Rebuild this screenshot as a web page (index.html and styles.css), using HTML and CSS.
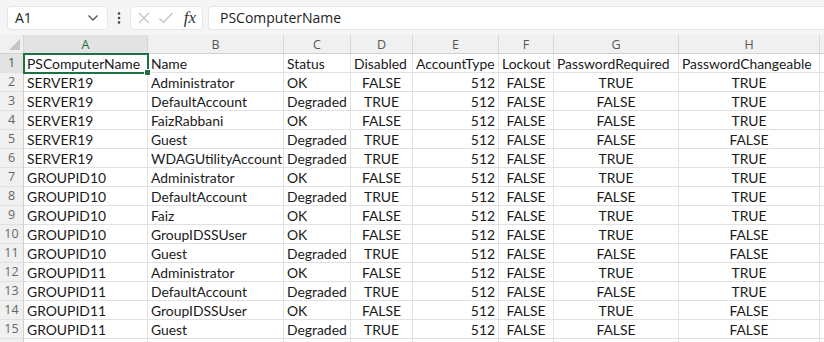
FILE: index.html
```html
<!DOCTYPE html>
<html lang="en">
<head>
    <meta charset="UTF-8">
    <meta name="viewport" content="width=device-width, initial-scale=1.0">
    <title>Sheet1</title>
    <link rel="stylesheet" href="styles.css">
</head>
<body>

    <!-- Name box + formula bar -->
    <div class="formula-row">
        <div class="name-box">
            <span>A1</span>
            <svg width="12" height="8" viewBox="0 0 12 8"><path d="M1.5 1.5 L6 6 L10.5 1.5" fill="none" stroke="#555" stroke-width="1.3"/></svg>
        </div>
        <div class="dots">
            <svg width="4" height="14" viewBox="0 0 4 14"><circle cx="2" cy="2.5" r="1.3" fill="#444"/><circle cx="2" cy="7" r="1.3" fill="#444"/><circle cx="2" cy="11.5" r="1.3" fill="#444"/></svg>
        </div>
        <div class="fx-box">
            <svg width="14" height="14" viewBox="0 0 14 14"><path d="M2 2 L12 12 M12 2 L2 12" stroke="#c4c4c4" stroke-width="1.3"/></svg>
            <svg width="16" height="14" viewBox="0 0 16 14"><path d="M1.5 7.5 L5.5 11.5 L14.5 2" fill="none" stroke="#c4c4c4" stroke-width="1.3"/></svg>
            <span class="fx">fx</span>
        </div>
        <div class="formula-input">PSComputerName</div>
    </div>

    <!-- Sheet grid -->
    <div class="sheet" id="sheet">
        <div class="corner"><span class="tri"></span></div>
        <div class="col-head sel">A</div>
        <div class="col-head">B</div>
        <div class="col-head">C</div>
        <div class="col-head">D</div>
        <div class="col-head">E</div>
        <div class="col-head">F</div>
        <div class="col-head">G</div>
        <div class="col-head">H</div>
        <div class="col-head"></div>
    </div>

    <script src="script.js"></script>
</body>
</html>
```

FILE: script.js
```js
var rows = [
    ["PSComputerName", "Name", "Status", "Disabled", "AccountType", "Lockout", "PasswordRequired", "PasswordChangeable"],
    ["SERVER19", "Administrator", "OK", "FALSE", 512, "FALSE", "TRUE", "TRUE"],
    ["SERVER19", "DefaultAccount", "Degraded", "TRUE", 512, "FALSE", "FALSE", "TRUE"],
    ["SERVER19", "FaizRabbani", "OK", "FALSE", 512, "FALSE", "FALSE", "TRUE"],
    ["SERVER19", "Guest", "Degraded", "TRUE", 512, "FALSE", "FALSE", "FALSE"],
    ["SERVER19", "WDAGUtilityAccount", "Degraded", "TRUE", 512, "FALSE", "TRUE", "TRUE"],
    ["GROUPID10", "Administrator", "OK", "FALSE", 512, "FALSE", "TRUE", "TRUE"],
    ["GROUPID10", "DefaultAccount", "Degraded", "TRUE", 512, "FALSE", "FALSE", "TRUE"],
    ["GROUPID10", "Faiz", "OK", "FALSE", 512, "FALSE", "TRUE", "TRUE"],
    ["GROUPID10", "GroupIDSSUser", "OK", "FALSE", 512, "FALSE", "TRUE", "FALSE"],
    ["GROUPID10", "Guest", "Degraded", "TRUE", 512, "FALSE", "FALSE", "FALSE"],
    ["GROUPID11", "Administrator", "OK", "FALSE", 512, "FALSE", "TRUE", "TRUE"],
    ["GROUPID11", "DefaultAccount", "Degraded", "TRUE", 512, "FALSE", "FALSE", "TRUE"],
    ["GROUPID11", "GroupIDSSUser", "OK", "FALSE", 512, "FALSE", "TRUE", "FALSE"],
    ["GROUPID11", "Guest", "Degraded", "TRUE", 512, "FALSE", "FALSE", "FALSE"],
    ["", "", "", "", "", "", "", ""]
];

var sheet = document.getElementById("sheet");

rows.forEach(function (row, i) {
    var head = document.createElement("div");
    head.className = "row-head" + (i === 0 ? " sel" : "");
    // last row is only a sliver at the bottom edge, leave its number off
    head.textContent = i < 15 ? i + 1 : "";
    sheet.appendChild(head);

    row.concat([""]).forEach(function (value, j) {
        var cell = document.createElement("div");
        cell.className = "cell";
        if (typeof value === "number") cell.className += " num";
        if (value === "TRUE" || value === "FALSE") cell.className += " bool";
        if (i === 0 && j === 0) cell.className += " active";
        cell.textContent = value;
        sheet.appendChild(cell);
    });
});
```

FILE: styles.css
```css
body {
    margin: 0;
    background: #fff;
    overflow: hidden;
    font-family: "Open Sans", "Noto Sans", sans-serif;
}

/* Formula bar */
.formula-row {
    display: flex;
    align-items: center;
    height: 35px;
    padding: 0 0 0 7px;
    background: #f5f5f5;
    box-sizing: border-box;
}

.name-box,
.fx-box,
.formula-input {
    height: 24px;
    background: #fff;
    border: 1px solid #e6e6e6;
    border-radius: 4px;
    box-sizing: border-box;
    display: flex;
    align-items: center;
}

.name-box {
    width: 101px;
    padding: 0 8px 0 7px;
    justify-content: space-between;
    font-size: 14px;
    color: #222;
}

.dots {
    width: 22px;
    display: flex;
    justify-content: center;
}

.fx-box {
    width: 73px;
    padding: 0 6px 0 6px;
    gap: 7px;
}

.fx {
    font-family: "Liberation Serif", serif;
    font-style: italic;
    font-size: 17px;
    color: #333;
    margin-left: 3px;
}

.formula-input {
    flex: 1;
    margin-left: 5px;
    padding-left: 11px;
    font-size: 14px;
    color: #222;
    border-right: none;
    border-radius: 4px 0 0 4px;
}

/* Grid */
.sheet {
    display: grid;
    grid-template-columns: 24px 124px 136px 67px 62px 86px 55px 125px 141px 1fr;
    grid-template-rows: 19px;
    grid-auto-rows: 19px;
    font-family: "Lato", "Liberation Sans", sans-serif;
    font-size: 13.9px;
    color: #1a1a1a;
}

.corner,
.col-head {
    background: #f0f0f0;
    border-bottom: 1px solid #d0d0d0;
    box-sizing: border-box;
}

.corner {
    position: relative;
    border-right: 1px solid #d6d6d6;
}

.tri {
    position: absolute;
    right: 3px;
    bottom: 3px;
    border-left: 11px solid transparent;
    border-bottom: 11px solid #c6c6c6;
}

.col-head {
    border-right: 1px solid #d6d6d6;
    text-align: center;
    font-family: "Open Sans", sans-serif;
    font-size: 12.5px;
    line-height: 19px;
    color: #555;
}

.col-head.sel {
    background: #e3e3e3;
    color: #1d6b3f;
    border-bottom: 1px solid #c3c3c3;
}

.row-head {
    background: #f0f0f0;
    border-right: 1px solid #d0d0d0;
    border-bottom: 1px solid #e0e0e0;
    box-sizing: border-box;
    text-align: center;
    font-family: "Open Sans", sans-serif;
    font-size: 12.5px;
    line-height: 18px;
    color: #666;
}

.row-head.sel {
    background: #e3e3e3;
    color: #1d6b3f;
}

.cell {
    border-right: 1px solid #e1e1e1;
    border-bottom: 1px solid #e1e1e1;
    box-sizing: border-box;
    padding: 1px 3px 0;
    line-height: 17px;
    white-space: nowrap;
    overflow: hidden;
}

.cell.num {
    text-align: right;
}

.cell.bool {
    text-align: center;
}

/* Selected cell */
.cell.active {
    position: relative;
    overflow: visible;
    outline: 2px solid #1e7145;
    outline-offset: -1px;
}

.cell.active::after {
    content: "";
    position: absolute;
    right: -4px;
    bottom: -4px;
    width: 5px;
    height: 5px;
    background: #1e7145;
    border: 1px solid #fff;
}
```
